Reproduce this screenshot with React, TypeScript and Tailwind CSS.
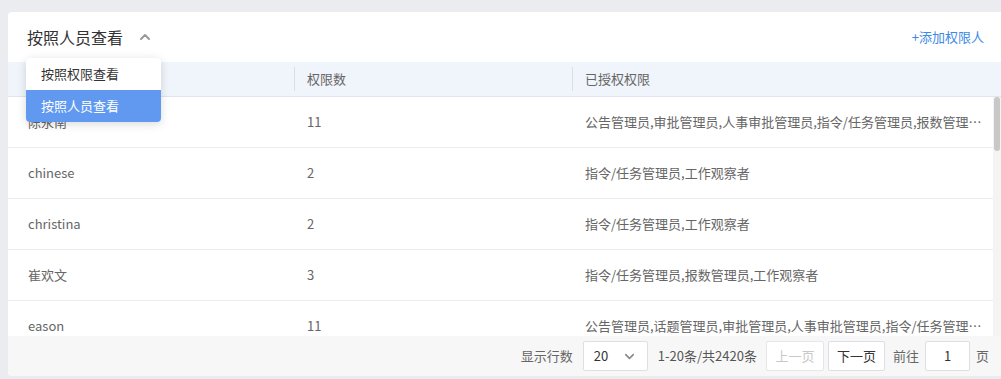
import React from 'react';
import { ChevronUp, ChevronDown } from 'lucide-react';

const rows = [
  { name: '陈永南', count: '11', perms: '公告管理员,审批管理员,人事审批管理员,指令/任务管理员,报数管理员,话题管理员,工作观察者' },
  { name: 'chinese', count: '2', perms: '指令/任务管理员,工作观察者' },
  { name: 'christina', count: '2', perms: '指令/任务管理员,工作观察者' },
  { name: '崔欢文', count: '3', perms: '指令/任务管理员,报数管理员,工作观察者' },
  { name: 'eason', count: '11', perms: '公告管理员,话题管理员,审批管理员,人事审批管理员,指令/任务管理员,报数管理员' },
];

export default function App() {
  return (
    <div
      className="w-[1001px] h-[379px] bg-[#ebecf0] pt-[12px] pl-[8px] overflow-hidden"
      style={{ fontFamily: '"Noto Sans CJK SC", "Noto Sans", sans-serif' }}
    >
      <div className="relative w-[993px] h-[364px] bg-white rounded-l-[4px] flex flex-col overflow-hidden">
        {/* Header */}
        <div className="h-[50px] shrink-0 flex items-center justify-between pl-[19px] pr-[17px]">
          <div className="flex items-center gap-[14px]">
            <span className="text-[16px] text-[#333]">按照人员查看</span>
            <ChevronUp className="w-[16px] h-[16px] text-[#999]" strokeWidth={3} />
          </div>
          <span className="text-[13px] text-[#3d8ae5]">+添加权限人</span>
        </div>

        {/* Table head */}
        <div className="h-[35px] shrink-0 flex bg-[#f0f4fb] border-b border-[#dfe4ee] text-[13px] text-[#666]">
          <div className="w-[286px] flex items-center pl-[20px]"></div>
          <div className="w-[278px] flex items-center pl-[13px] relative">
            <span className="absolute left-0 top-[5px] bottom-[5px] w-px bg-[#d8dde6]" />
            权限数
          </div>
          <div className="flex-1 flex items-center pl-[13px] relative">
            <span className="absolute left-0 top-[5px] bottom-[5px] w-px bg-[#d8dde6]" />
            已授权权限
          </div>
        </div>

        {/* Table body */}
        <div className="flex-1 flex min-h-0">
          <div className="flex-1 overflow-hidden">
            {rows.map((r) => (
              <div key={r.name} className="h-[51px] flex border-b border-[#ebedf0] text-[13px] text-[#666]">
                <div className="w-[286px] flex items-center pl-[20px]">{r.name}</div>
                <div className="w-[278px] flex items-center pl-[13px]">{r.count}</div>
                <div className="flex-1 min-w-0 flex items-center pl-[13px] pr-[4px]">
                  <span className="truncate">{r.perms}</span>
                </div>
              </div>
            ))}
          </div>
          <div className="w-[8px] bg-[#f4f4f4] flex flex-col">
            <div className="h-[54px] bg-[#c8c8c8] rounded-[3px] mx-[1px]" />
          </div>
        </div>

        {/* Footer */}
        <div className="h-[40px] shrink-0 bg-[#f7f7f7] flex items-center justify-end pr-[12px] text-[13px] text-[#666]">
          <span className="mr-[10px]">显示行数</span>
          <div className="w-[65px] h-[30px] bg-white border border-[#dcdfe6] rounded-[2px] flex items-center justify-between pl-[10px] pr-[10px] text-[#333]">
            <span>20</span>
            <ChevronDown className="w-[15px] h-[15px] text-[#888]" strokeWidth={2.5} />
          </div>
          <span className="ml-[10px] mr-[9px] text-[#555]">1-20条/共2420条</span>
          <div className="w-[58px] h-[30px] bg-white border border-[#e4e6ea] rounded-[2px] flex items-center justify-center text-[#c8c8c8]">上一页</div>
          <div className="ml-[4px] w-[57px] h-[30px] bg-white border border-[#dcdfe6] rounded-[2px] flex items-center justify-center text-[#333]">下一页</div>
          <span className="ml-[8px] mr-[6px]">前往</span>
          <div className="w-[45px] h-[30px] bg-white border border-[#dcdfe6] rounded-[2px] flex items-center justify-center text-[#333]">1</div>
          <span className="ml-[6px]">页</span>
        </div>

        {/* Dropdown */}
        <div className="absolute left-[18px] top-[46px] w-[135px] bg-white rounded-[4px] shadow-[0_2px_10px_rgba(0,0,0,0.15)] overflow-hidden text-[13px]">
          <div className="h-[32px] flex items-center pl-[15px] text-[#333]">按照权限查看</div>
          <div className="h-[32px] flex items-center pl-[15px] bg-[#6199f0] text-white">按照人员查看</div>
        </div>
      </div>
    </div>
  );
}
